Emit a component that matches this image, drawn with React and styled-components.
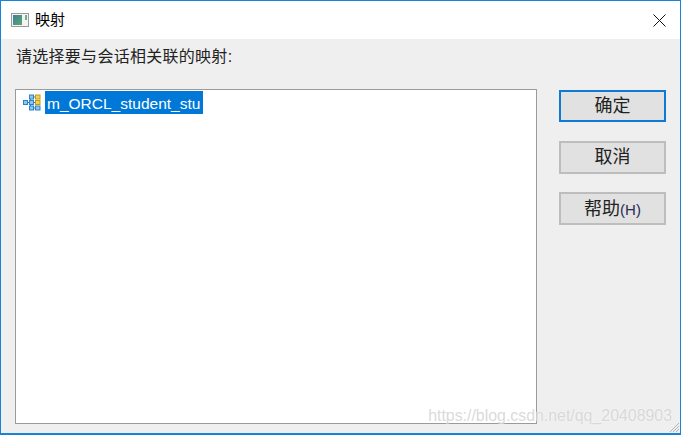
import React from "react";
import styled, { createGlobalStyle } from "styled-components";

const GlobalStyle = createGlobalStyle`
  html, body {
    margin: 0;
    padding: 0;
    width: 681px;
    height: 435px;
    overflow: hidden;
    background: #efefef;
  }
  * { box-sizing: border-box; }
`;

const FONT = `"Liberation Sans", "Noto Sans CJK SC", sans-serif`;

const Window = styled.div`
  position: relative;
  width: 681px;
  height: 435px;
  border: 1px solid #1883d7;
  border-bottom-width: 2px;
  display: flex;
  flex-flow: column;
  font-family: ${FONT};
  color: #1a1a1a;
`;

const TitleBar = styled.div`
  height: 38px;
  flex: none;
  background: #fff;
  display: flex;
  align-items: center;
  padding-left: 10px;
  padding-right: 14px;
`;

const Title = styled.div`
  font-size: 15px;
  line-height: 20px;
  color: #000;
  margin-left: 6px;
  flex: 1;
`;

const Body = styled.div`
  flex: 1;
  background: #efefef;
  display: flex;
  flex-flow: column;
  padding: 8px 14px 9px 14px;
  min-height: 0;
`;

const Prompt = styled.div`
  font-size: 16px;
  line-height: 20px;
  height: 42px;
  padding-left: 1px;
  color: #222;
  letter-spacing: 0.28px;
`;

const Content = styled.div`
  flex: 1;
  display: flex;
  min-height: 0;
`;

const MappingList = styled.div`
  width: 522px;
  background: #fff;
  border: 1px solid #9b9b9b;
  padding: 1px 0 0 7px;
`;

const MappingRow = styled.div`
  display: flex;
  align-items: center;
  height: 23px;
`;

const MappingName = styled.span`
  margin-left: 4px;
  background: #0078d7;
  color: #fff;
  font-size: 15.5px;
  line-height: 25px;
  height: 23px;
  padding: 0 3px 0 2px;
`;

const ButtonColumn = styled.div`
  margin-left: 22px;
  padding-top: 1px;
  display: flex;
  flex-flow: column;
  gap: 18.5px;
`;

const DialogButton = styled.button`
  width: 107px;
  height: ${(p) => (p.$focused ? "32px" : "33px")};
  padding: 0;
  background: #e1e1e1;
  border: ${(p) => (p.$focused ? "2px solid #0d7bd6" : "2px solid #bdbdbd")};
  font-family: ${FONT};
  font-size: 18px;
  line-height: 24px;
  color: #222;
  display: flex;
  align-items: center;
  justify-content: center;
`;

const Mnemonic = styled.span`
  font-size: 15px;
  margin-top: 3px;
  color: #2b2b55;
`;

const Watermark = styled.div`
  position: absolute;
  right: 8px;
  bottom: 8px;
  font-family: "Liberation Sans", sans-serif;
  font-size: 15.9px;
  color: rgba(208, 208, 208, 0.8);
  text-shadow: 0 0 2px rgba(255, 255, 255, 0.8);
`;

const Grip = styled.svg`
  position: absolute;
  right: 0;
  bottom: 0;
`;

const AppIcon = () => (
  <svg width="18" height="16" viewBox="0 0 18 16">
    <defs>
      <linearGradient id="pane" x1="0" y1="0" x2="1" y2="1">
        <stop offset="0" stopColor="#3f7f9c" />
        <stop offset="1" stopColor="#5aa86c" />
      </linearGradient>
    </defs>
    <rect x="0.5" y="1.5" width="17" height="13" fill="#f4f4f4" stroke="#9a9a9a" />
    <rect x="2" y="3" width="9" height="10" fill="url(#pane)" />
    <rect x="14" y="3" width="2" height="5" fill="#6fae8e" />
  </svg>
);

const MapIcon = () => (
  <svg width="18" height="17" viewBox="0 0 18 17">
    <path d="M3 8.5H14M7.5 3V14M7.5 3H14M7.5 14H14" stroke="#2f7fc4" fill="none" />
    <rect x="0.5" y="6.5" width="4" height="4" fill="#8cc8ee" stroke="#2b82c9" />
    <rect x="6.5" y="6.5" width="4" height="4" fill="#8cc8ee" stroke="#2b82c9" />
    <rect x="6.5" y="1" width="4" height="4" fill="#8cc8ee" stroke="#2b82c9" />
    <rect x="6.5" y="12" width="4" height="4" fill="#8cc8ee" stroke="#2b82c9" />
    <rect x="12.5" y="1" width="4.5" height="4" fill="#f6d24a" stroke="#c09a1c" />
    <rect x="12.5" y="6.5" width="4.5" height="4" fill="#f6d24a" stroke="#c09a1c" />
    <rect x="12.5" y="12" width="4.5" height="4" fill="#8cc8ee" stroke="#2b82c9" />
  </svg>
);

const CloseIcon = () => (
  <svg width="13" height="13" viewBox="0 0 13 13">
    <path d="M0.5 0.5L12.5 12.5M12.5 0.5L0.5 12.5" stroke="#111" strokeWidth="1" />
  </svg>
);

const App = () => {
  return (
    <>
      <GlobalStyle />
      <Window>
        <TitleBar>
          <AppIcon />
          <Title>映射</Title>
          <CloseIcon />
        </TitleBar>
        <Body>
          <Prompt>请选择要与会话相关联的映射:</Prompt>
          <Content>
            <MappingList>
              <MappingRow>
                <MapIcon />
                <MappingName>m_ORCL_student_stu</MappingName>
              </MappingRow>
            </MappingList>
            <ButtonColumn>
              <DialogButton $focused>确定</DialogButton>
              <DialogButton>取消</DialogButton>
              <DialogButton>
                帮助<Mnemonic>(H)</Mnemonic>
              </DialogButton>
            </ButtonColumn>
          </Content>
        </Body>
        <Watermark>https://blog.csdn.net/qq_20408903</Watermark>
        <Grip width="12" height="12" viewBox="0 0 12 12">
          <path d="M11 2L2 11M11 5L5 11M11 8L8 11" stroke="#b5b5b5" fill="none" />
        </Grip>
      </Window>
    </>
  );
};

export default App;
